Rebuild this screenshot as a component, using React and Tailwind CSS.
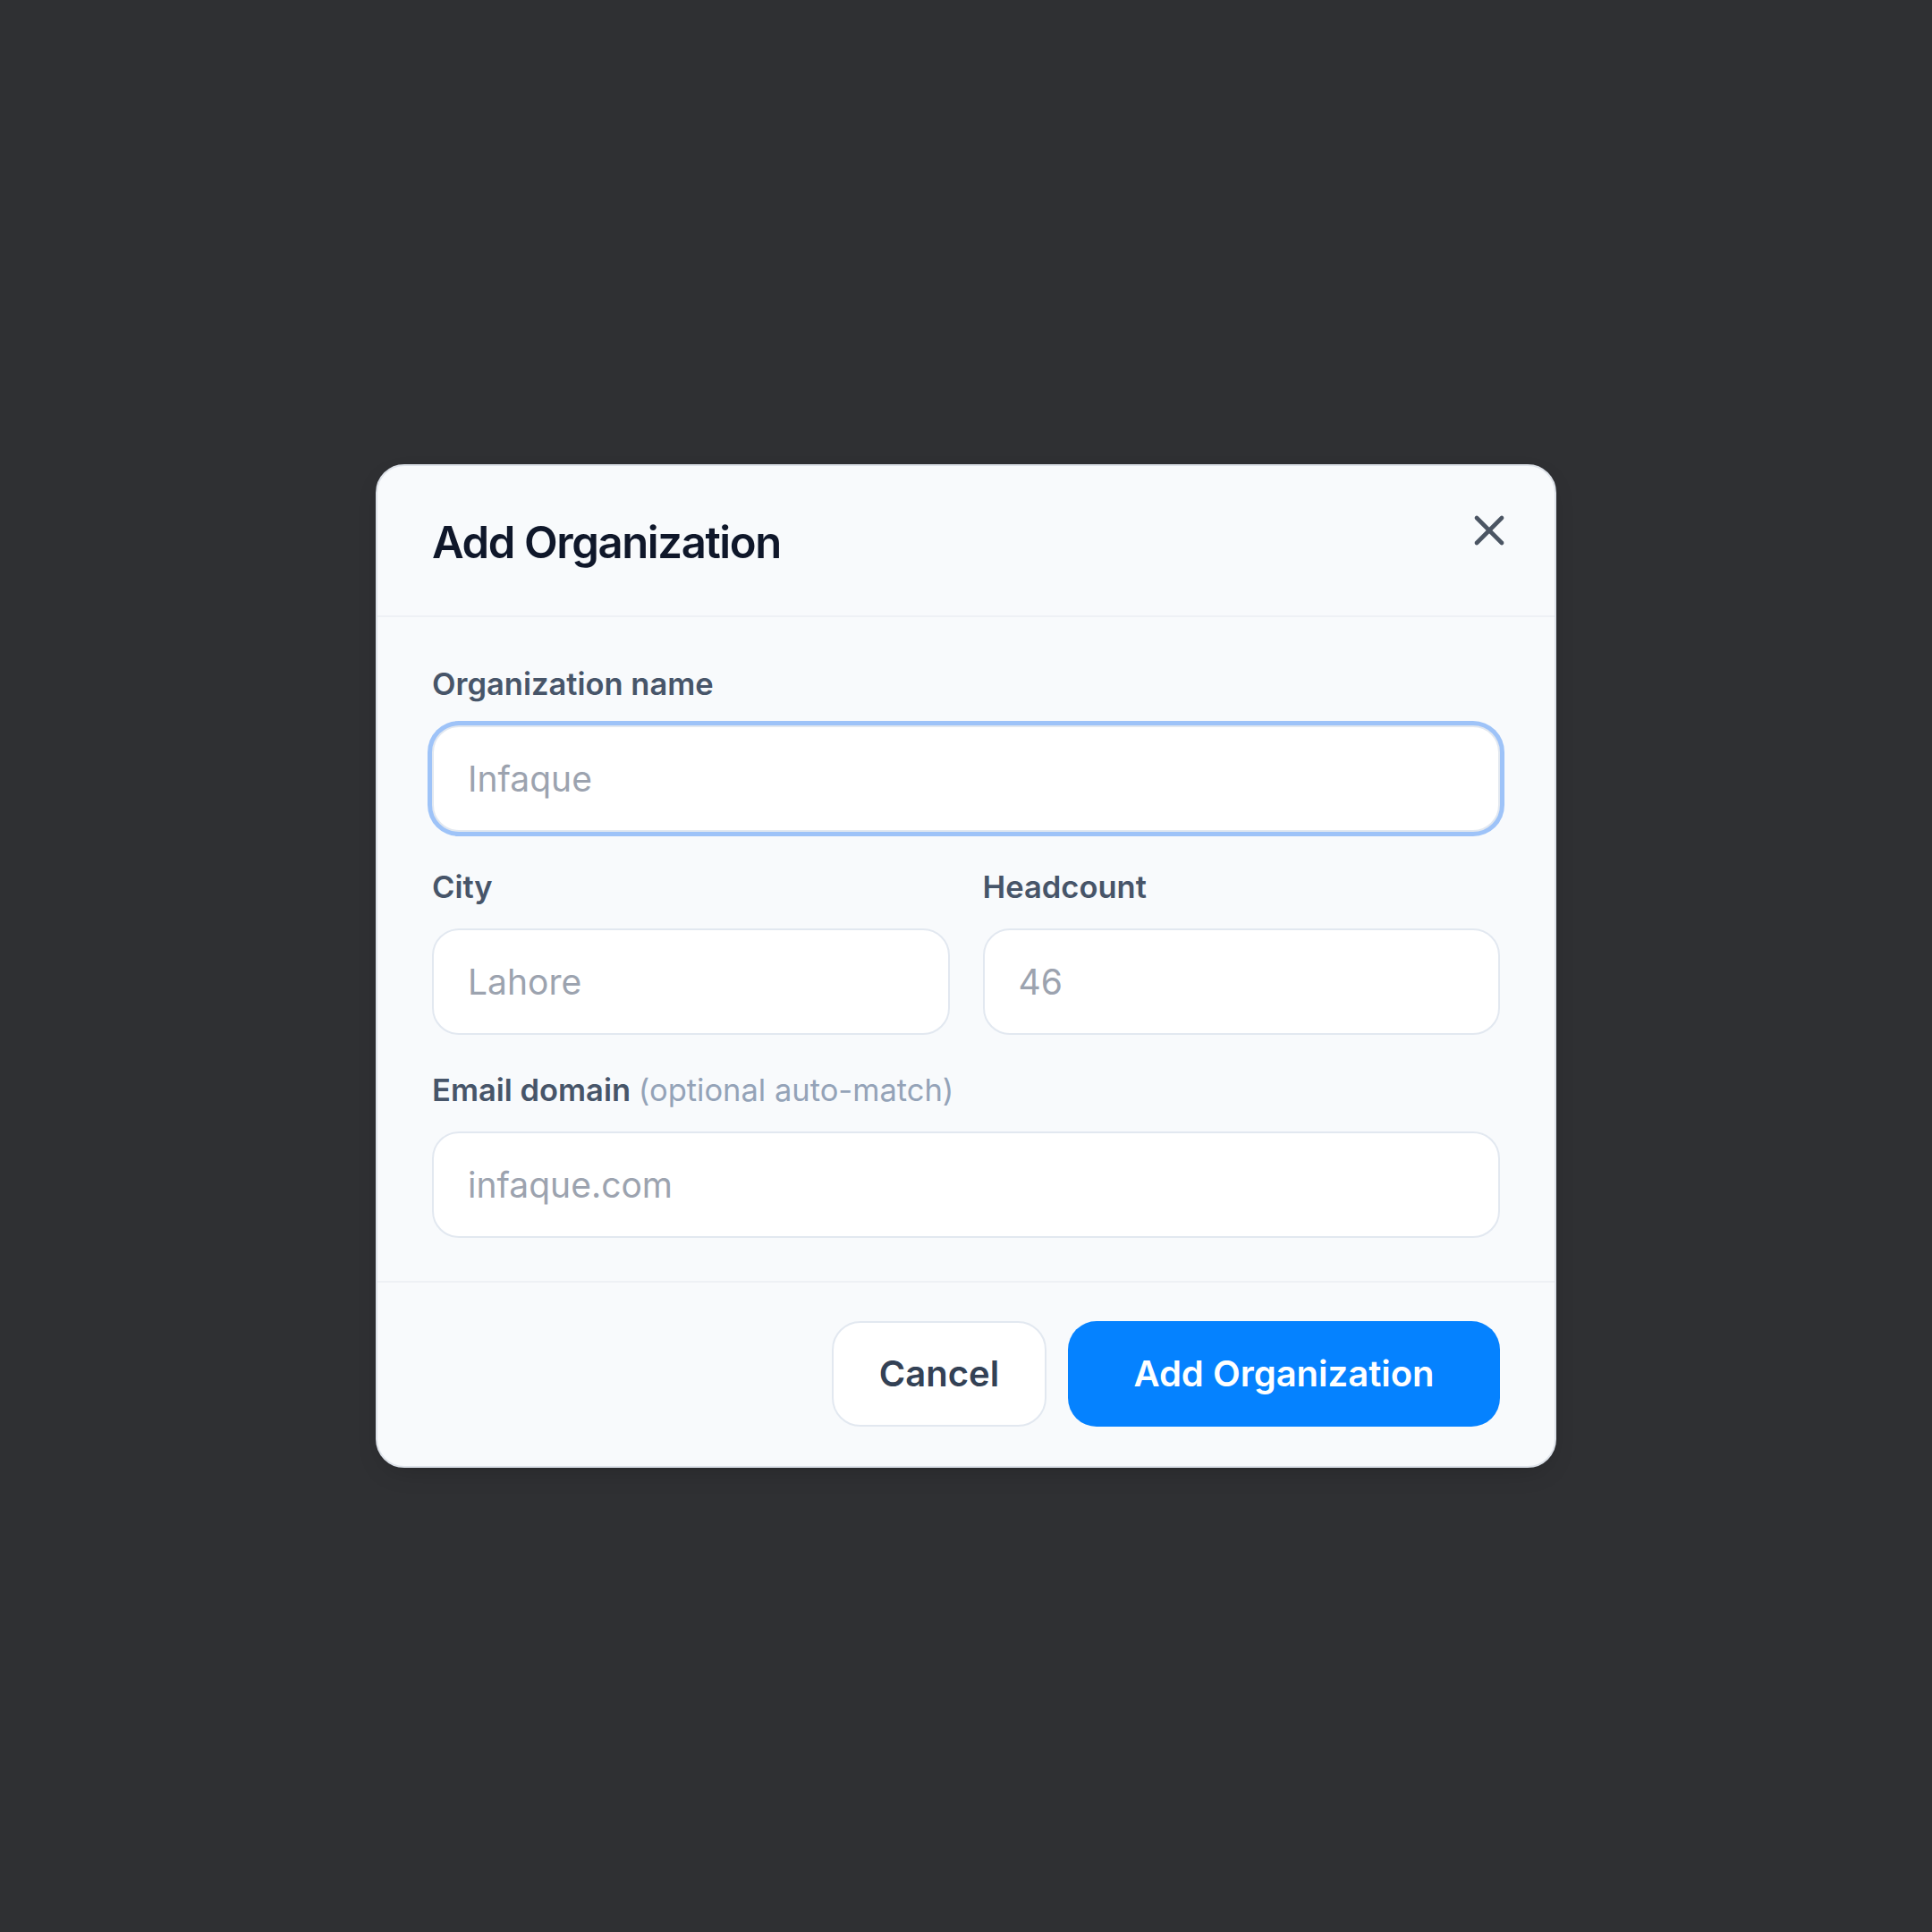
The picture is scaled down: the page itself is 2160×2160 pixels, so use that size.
import React from "react";
import { X } from "lucide-react";

const label = "block mb-[21px] text-[34.5px] leading-[50px] font-semibold text-[#475569]";
const input =
  "block h-[119px] w-full rounded-[30px] border-2 border-[#e2e8f0] bg-white px-[38px] text-[39px] text-[#334155] placeholder:text-[#9ca3af] outline-none";

export default function App() {
  return (
    <div className="min-h-screen flex items-center justify-center bg-[#2f3033] font-['Inter',sans-serif]">
      <div className="w-[1320px] rounded-[32px] border-2 border-[#dde2e9] bg-[#f8fafc] shadow-[0_10px_30px_-12px_rgba(0,0,0,0.25)]">
        <div className="flex items-start justify-between px-[61px] pt-[51px] pb-[46px] border-b-2 border-[#eef1f5]">
          <h2 className="text-[49px] leading-[70px] font-semibold tracking-[-0.028em] text-[#0f172a]">
            Add Organization
          </h2>
          <button className="-mt-[7px] -mr-[16px] text-[#4b5563]">
            <X size={56} strokeWidth={2} />
          </button>
        </div>

        <form className="flex flex-col gap-[37px] px-[61px] pt-[50px] pb-[48px]">
          <div>
            <label className={label}>Organization name</label>
            <input
              className={input + " border-[#dbe3ee] ring-[5px] ring-[#9ec3f8]"}
              placeholder="Infaque"
            />
          </div>

          <div className="grid grid-cols-2 gap-[37px]">
            <div>
              <label className={label}>City</label>
              <input className={input} placeholder="Lahore" />
            </div>
            <div>
              <label className={label}>Headcount</label>
              <input className={input} placeholder="46" />
            </div>
          </div>

          <div>
            <label className={label}>
              Email domain{" "}
              <span className="font-normal text-[#94a3b8]">(optional auto-match)</span>
            </label>
            <input className={input} placeholder="infaque.com" />
          </div>
        </form>

        <div className="flex justify-end gap-[24px] px-[61px] pt-[43px] pb-[44px] border-t-2 border-[#eef1f5]">
          <button className="h-[118px] w-[240px] rounded-[32px] border-2 border-[#e2e8f0] bg-white text-[40px] font-semibold text-[#334155]">
            Cancel
          </button>
          <button className="h-[118px] w-[483px] rounded-[32px] bg-[#0582ff] text-[40px] font-semibold text-white">
            Add Organization
          </button>
        </div>
      </div>
    </div>
  );
}
